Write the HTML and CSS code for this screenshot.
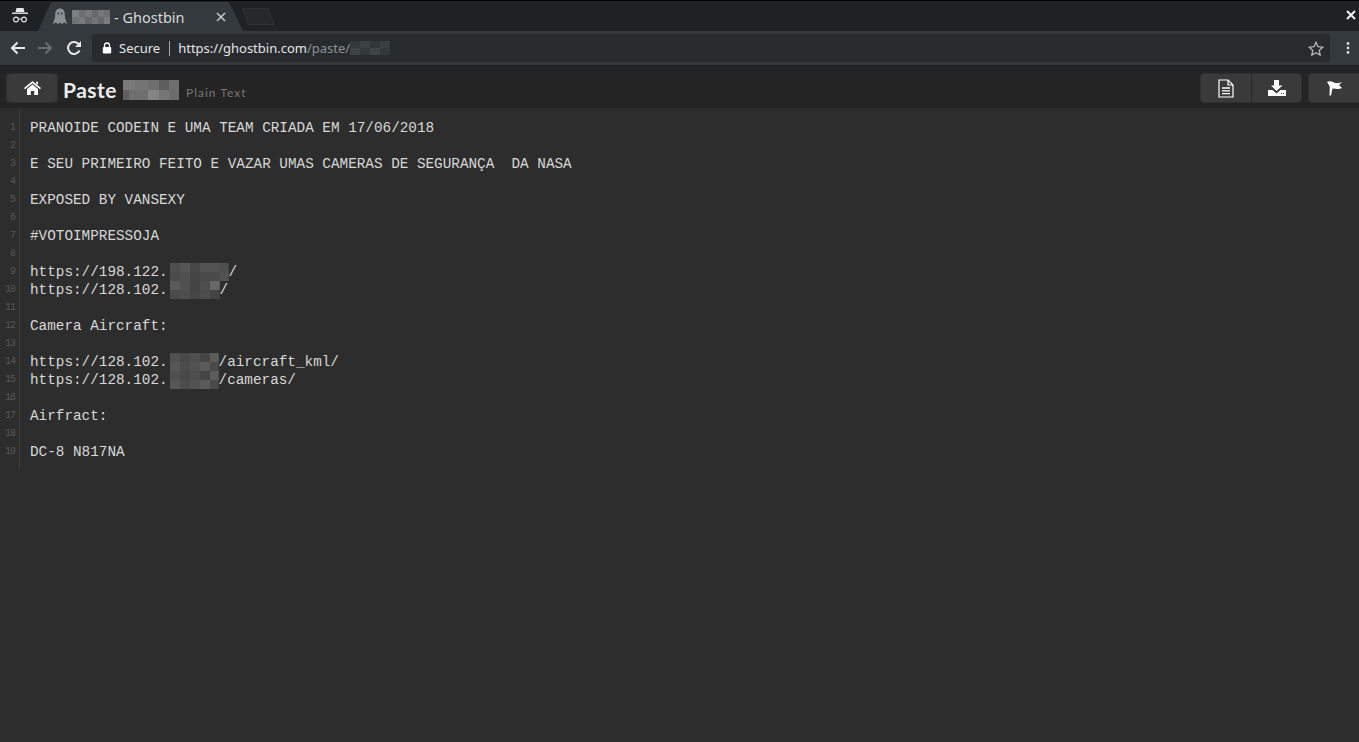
FILE: index.html
```html
<!DOCTYPE html>
<html lang="en">
<head>
<meta charset="utf-8">
<title>Ghostbin</title>
<link rel="stylesheet" href="styles.css">
</head>
<body>
<header class="chrome">
  <div class="tabstrip">
    <svg class="incog" width="18" height="16" viewBox="0 0 18 16"><path d="M5.500 1h7l1 4h-9z" fill="#e6e8e9"/><path d="M1 5.500h16v1.400H1z" fill="#e6e8e9"/><circle cx="5" cy="12.500" r="2.400" fill="none" stroke="#e6e8e9" stroke-width="1.100"/><circle cx="13" cy="12.500" r="2.400" fill="none" stroke="#e6e8e9" stroke-width="1.100"/><path d="M7.500 12h3" stroke="#e6e8e9" stroke-width="1"/></svg>
    <div class="tab">
      <svg class="ghost" width="16" height="17" viewBox="0 0 16 17"><path d="M8 .5c3.300 0 4.600 2.400 4.700 5.200.1 4 1 7.300 2.800 10.300L12 14.600 10 16.300 8 14.600 6 16.300 4 14.600.5 16C2.300 13 3.200 9.700 3.300 5.700 3.400 2.900 4.700.5 8 .5z" fill="#8b8f90"/><circle cx="6.300" cy="5.500" r=".9" fill="#33393c"/><circle cx="9.700" cy="5.500" r=".9" fill="#33393c"/></svg>
      <span class="blur blur-tab"></span>
      <span class="tabtitle">- Ghostbin</span>
      <svg class="tabclose" width="10" height="10" viewBox="0 0 10 10"><path d="M1 1l8 8M9 1l-8 8" stroke="#c8cbcc" stroke-width="1.500"/></svg>
    </div>
    <svg class="newtab" width="33" height="17" viewBox="0 0 33 17"><path d="M.8.5h25.700l5.700 16H6.500z" fill="#25292b" stroke="#2e3335"/></svg>
    <svg class="winclose" width="10" height="10" viewBox="0 0 10 10"><path d="M1 1l8 8M9 1l-8 8" stroke="#f0f0f0" stroke-width="2"/></svg>
  </div>
  <div class="toolbar">
    <svg class="nav nav-back" width="16" height="16" viewBox="0 0 16 16"><path d="M15 8H2M7.500 2.500L2 8l5.500 5.500" fill="none" stroke="#e8eaea" stroke-width="2"/></svg>
    <svg class="nav nav-forward" width="16" height="16" viewBox="0 0 16 16"><path d="M1 8h13M8.500 2.500L14 8l-5.500 5.500" fill="none" stroke="#6a6f72" stroke-width="2"/></svg>
    <svg class="nav nav-reload" width="16" height="16" viewBox="0 0 16 16"><path d="M13.500 10.500A6 6 0 1 1 13 4.500" fill="none" stroke="#e8eaea" stroke-width="2"/><path d="M15 1v6H9z" fill="#e8eaea"/></svg>
    <div class="omnibox">
      <svg class="lock" width="10" height="12" viewBox="0 0 10 12"><path d="M2.500 5V3.500a2.500 2.500 0 0 1 5 0V5" fill="none" stroke="#fff" stroke-width="1.300"/><rect x=".8" y="5" width="8.400" height="6.500" rx="1" fill="#fff"/></svg>
      <span class="secure">Secure</span>
      <span class="divider"></span>
      <span class="url">https://ghostbin.com<span class="urlpath">/paste/</span></span>
      <span class="blur blur-url"></span>
      <svg class="star" width="16" height="15" viewBox="0 0 16 15"><path d="M8 1.300l2 4.400 4.700.5-3.500 3.200 1 4.700L8 11.700 3.800 14.100l1-4.700L1.300 6.200 6 5.700z" fill="none" stroke="#b5b8b9" stroke-width="1.300"/></svg>
    </div>
    <svg class="menu" width="4" height="14" viewBox="0 0 4 14"><circle cx="2" cy="2.500" r="1.400" fill="#d8dadb"/><circle cx="2" cy="7" r="1.400" fill="#d8dadb"/><circle cx="2" cy="11.500" r="1.400" fill="#d8dadb"/></svg>
  </div>
</header>
<nav class="pagebar">
  <a class="btn btn-home"><svg width="17" height="14" viewBox="0 0 17 14"><path d="M8.500 0L17 7l-1 1.200-7.500-6-7.500 6L0 7z" fill="#fff"/><path d="M8.500 3.500L14 8v6h-3.800v-4H6.800v4H3V8z" fill="#fff"/><path d="M12 .8h2v3l-2-1.600z" fill="#fff"/></svg></a>
  <h1 class="title">Paste</h1>
  <span class="blur blur-title"></span>
  <span class="lang">Plain Text</span>
  <div class="actions">
    <div class="btngroup">
      <a class="btn btn-doc"><svg width="16" height="19" viewBox="0 0 16 19"><path d="M1 1h9l5 5v12H1z" fill="none" stroke="#fff" stroke-width="1.200"/><path d="M10 1v5h5" fill="none" stroke="#fff" stroke-width="1.200"/><path d="M4 9h8M4 11.800h8M4 14.600h8" stroke="#fff" stroke-width="1.300"/></svg></a>
      <a class="btn btn-dl"><svg width="18" height="16" viewBox="0 0 18 16"><path d="M6 0h5v5.500h3.500L8.500 11 3 5.500h3z" fill="#fff"/><path d="M0 10h4.500l4 3.500 4-3.500H18v6H0z" fill="#fff"/><path d="M13 13.500h1M15 13.500h1" stroke="#444" stroke-width="1"/></svg></a>
    </div>
    <a class="btn btn-flag"><svg width="17" height="16" viewBox="0 0 17 16"><path d="M1 2C3 1 5 1 7 2c2 1 4 2 9 0l-3 3 3 3c-4 2-7 0-9.500.5L5 15.500H3.500L3.800 7C3 5 2 3.500 1 2z" fill="#fff"/></svg></a>
  </div>
</nav>
<main class="paste">
  <ol class="gutter">
    <li>1</li><li>2</li><li>3</li><li>4</li><li>5</li><li>6</li><li>7</li><li>8</li><li>9</li><li>10</li><li>11</li><li>12</li><li>13</li><li>14</li><li>15</li><li>16</li><li>17</li><li>18</li><li>19</li>
  </ol>
  <div class="code">
    <div class="line">PRANOIDE CODEIN E UMA TEAM CRIADA EM 17/06/2018</div>
    <div class="line"></div>
    <div class="line">E SEU PRIMEIRO FEITO E VAZAR UMAS CAMERAS DE SEGURANÇA  DA NASA</div>
    <div class="line"></div>
    <div class="line">EXPOSED BY VANSEXY</div>
    <div class="line"></div>
    <div class="line">#VOTOIMPRESSOJA</div>
    <div class="line"></div>
    <div class="line">https://198.122.<span class="blur blur-a"></span>/</div>
    <div class="line">https://128.102.<span class="blur blur-b"></span>/</div>
    <div class="line"></div>
    <div class="line">Camera Aircraft:</div>
    <div class="line"></div>
    <div class="line">https://128.102.<span class="blur blur-c"></span>/aircraft_kml/</div>
    <div class="line">https://128.102.<span class="blur blur-c"></span>/cameras/</div>
    <div class="line"></div>
    <div class="line">Airfract:</div>
    <div class="line"></div>
    <div class="line">DC-8 N817NA</div>
  </div>
</main>
</body>
</html>
```
FILE: styles.css
```css
* { box-sizing: border-box; }
html, body { margin: 0; height: 100%; }
body {
  background: #2d2d2d;
  font-family: "Noto Sans", sans-serif;
  color: #e8e8e8;
  overflow: hidden;
  display: flex;
  flex-direction: column;
}
.chrome { flex: none; }
.tabstrip {
  height: 31px;
  background: #1f2224;
  border-top: 1px solid #050505;
  display: flex;
  align-items: flex-end;
  position: relative;
}
.incog { margin: 0 0 8px 11px; flex: none; }
.tab {
  width: 205px;
  height: 29px;
  margin-left: 9px;
  background: #33393c;
  clip-path: polygon(0 100%, 12px 2px, 14px 0, 190px 0, 192px 2px, 205px 100%);
  display: flex;
  align-items: center;
  padding-left: 14px;
}
.ghost { flex: none; }
.blur { display: inline-block; flex: none; }
.blur-tab {
  width: 38px; height: 14px; margin: 0 4px 0 4px;
  background:
    linear-gradient(90deg, #7d8183 0 7px, #6a6e70 7px 13px, #75797b 13px 20px, #64686a 20px 26px, #74787a 26px 32px, #6b6f71 32px) top / 100% 50% no-repeat,
    linear-gradient(90deg, #707476 0 7px, #777b7d 7px 13px, #65696b 13px 20px, #72767a 20px 26px, #66696b 26px 32px, #777b7d 32px) bottom / 100% 50% no-repeat;
}
.tabtitle { font-size: 14.500px; color: #d6d8d9; white-space: nowrap; }
.tabclose { margin-left: 31px; flex: none; }
.newtab { margin: 0 0 6px -1px; flex: none; }
.winclose { position: absolute; right: 3px; top: 9px; }
.toolbar {
  height: 35px;
  background: #33393c;
  border-bottom: 1px solid #1b1d1e;
  display: flex;
  align-items: center;
  padding: 0 9px 0 10px;
}
.nav { flex: none; }
.nav-forward { margin-left: 11px; }
.nav-reload { margin-left: 13px; }
.omnibox {
  flex: 1;
  height: 28px;
  background: #272b2d;
  border-radius: 3px;
  margin-left: 10px;
  display: flex;
  align-items: center;
  padding-left: 10px;
  font-size: 13px;
}
.lock { flex: none; }
.secure { margin-left: 7px; color: #e4e6e7; }
.divider { width: 1px; height: 15px; background: #a5a8a9; margin: 0 8px 0 9px; }
.url { color: #e4e6e7; }
.urlpath { color: #8e9294; }
.blur-url {
  width: 40px; height: 14px;
  background:
    linear-gradient(90deg, #34393b 0 10px, #3d4244 10px 20px, #33383a 20px 30px, #3b4042 30px) top / 100% 50% no-repeat,
    linear-gradient(90deg, #3e4345 0 10px, #34393b 10px 20px, #404547 20px 30px, #33383a 30px) bottom / 100% 50% no-repeat;
}
.star { margin-left: auto; margin-right: 6px; }
.menu { margin-left: 16px; flex: none; }
.pagebar {
  flex: none;
  height: 42px;
  background: #242424;
  display: flex;
  align-items: center;
  padding: 7px 0 5px 6px;
}
.btn {
  height: 30px;
  background: #3a3a3a;
  border: 1px solid #2e2e2e;
  display: flex;
  align-items: center;
  justify-content: center;
}
.btn-home { width: 52px; border-radius: 4px; }
.title {
  margin: 0 0 0 5px;
  padding-top: 4px;
  font-family: "Lato", sans-serif;
  font-size: 21px;
  letter-spacing: .5px;
  line-height: 30px;
  font-weight: 700;
  color: #ededed;
}
.blur-title {
  width: 56px; height: 20px; margin: 4px 7px 0 6px;
  background:
    linear-gradient(90deg, #7a7a7a 0 12px, #747474 12px 25px, #6e6e6e 25px 36px, #5e5e5e 36px 46px, #6e6e6e 46px) top / 100% 50% no-repeat,
    linear-gradient(90deg, #5f5f5f 0 6px, #6f6f6f 6px 25px, #848484 25px 36px, #767676 36px 46px, #6c6c6c 46px) bottom / 100% 50% no-repeat;
}
.lang {
  font-family: "Lato", sans-serif;
  font-size: 12px;
  color: #767676;
  letter-spacing: 1px;
  margin-top: 9px;
}
.actions { margin-left: auto; display: flex; gap: 6px; }
.btngroup { display: flex; }
.btn-doc { width: 52px; border-radius: 4px 0 0 4px; }
.btn-dl { width: 51px; border-radius: 0 4px 4px 0; border-left-color: #262626; margin-left: -1px; }
.btn-flag { width: 51px; border-radius: 4px 0 0 4px; border-right: 0; }
.paste {
  flex: 1;
  display: flex;
  align-items: flex-start;
  font-family: "Liberation Mono", monospace;
}
.gutter {
  list-style: none;
  margin: 0;
  padding: 11px 4px 9px 0;
  width: 20px;
  border-right: 1px solid #3a3a3a;
  text-align: right;
  font-size: 10px;
  letter-spacing: -1px;
  line-height: 18px;
  color: #585858;
}
.gutter li { height: 18px; }
.code {
  padding: 11px 0 0 10px;
  font-size: 14.330px;
  line-height: 18px;
  color: #d8d8d8;
}
.line { height: 18px; display: flex; align-items: center; white-space: pre; }
.blur-a, .blur-b, .blur-c { height: 18px; margin-left: 2.400px; }
.blur-a {
  width: 58.600px;
  background:
    linear-gradient(90deg, #4e4e4e 0 10px, #565656 10px 20px, #484848 20px 30px, #525252 30px 50px, #4e4e4e 50px) top / 100% 50% no-repeat,
    linear-gradient(90deg, #4a4a4a 0 10px, #505050 10px 20px, #454545 20px 30px, #4a4a4a 30px 50px, #525252 50px) bottom / 100% 50% no-repeat;
}
.blur-b {
  width: 49.600px;
  background:
    linear-gradient(90deg, #5a5a5a 0 10px, #505050 10px 20px, #444 20px 30px, #4e4e4e 30px 40px, #686868 40px) top / 100% 50% no-repeat,
    linear-gradient(90deg, #4a4a4a 0 10px, #4e4e4e 10px 20px, #464646 20px 30px, #4c4c4c 30px 40px, #444 40px) bottom / 100% 50% no-repeat;
}
.blur-c {
  width: 48.600px;
  background:
    linear-gradient(90deg, #505050 0 10px, #484848 10px 20px, #4e4e4e 20px 30px, #454545 30px 40px, #5c5c5c 40px) top / 100% 50% no-repeat,
    linear-gradient(90deg, #565656 0 10px, #4c4c4c 10px 20px, #525252 20px 30px, #5a5a5a 30px 40px, #4a4a4a 40px) bottom / 100% 50% no-repeat;
}
```
